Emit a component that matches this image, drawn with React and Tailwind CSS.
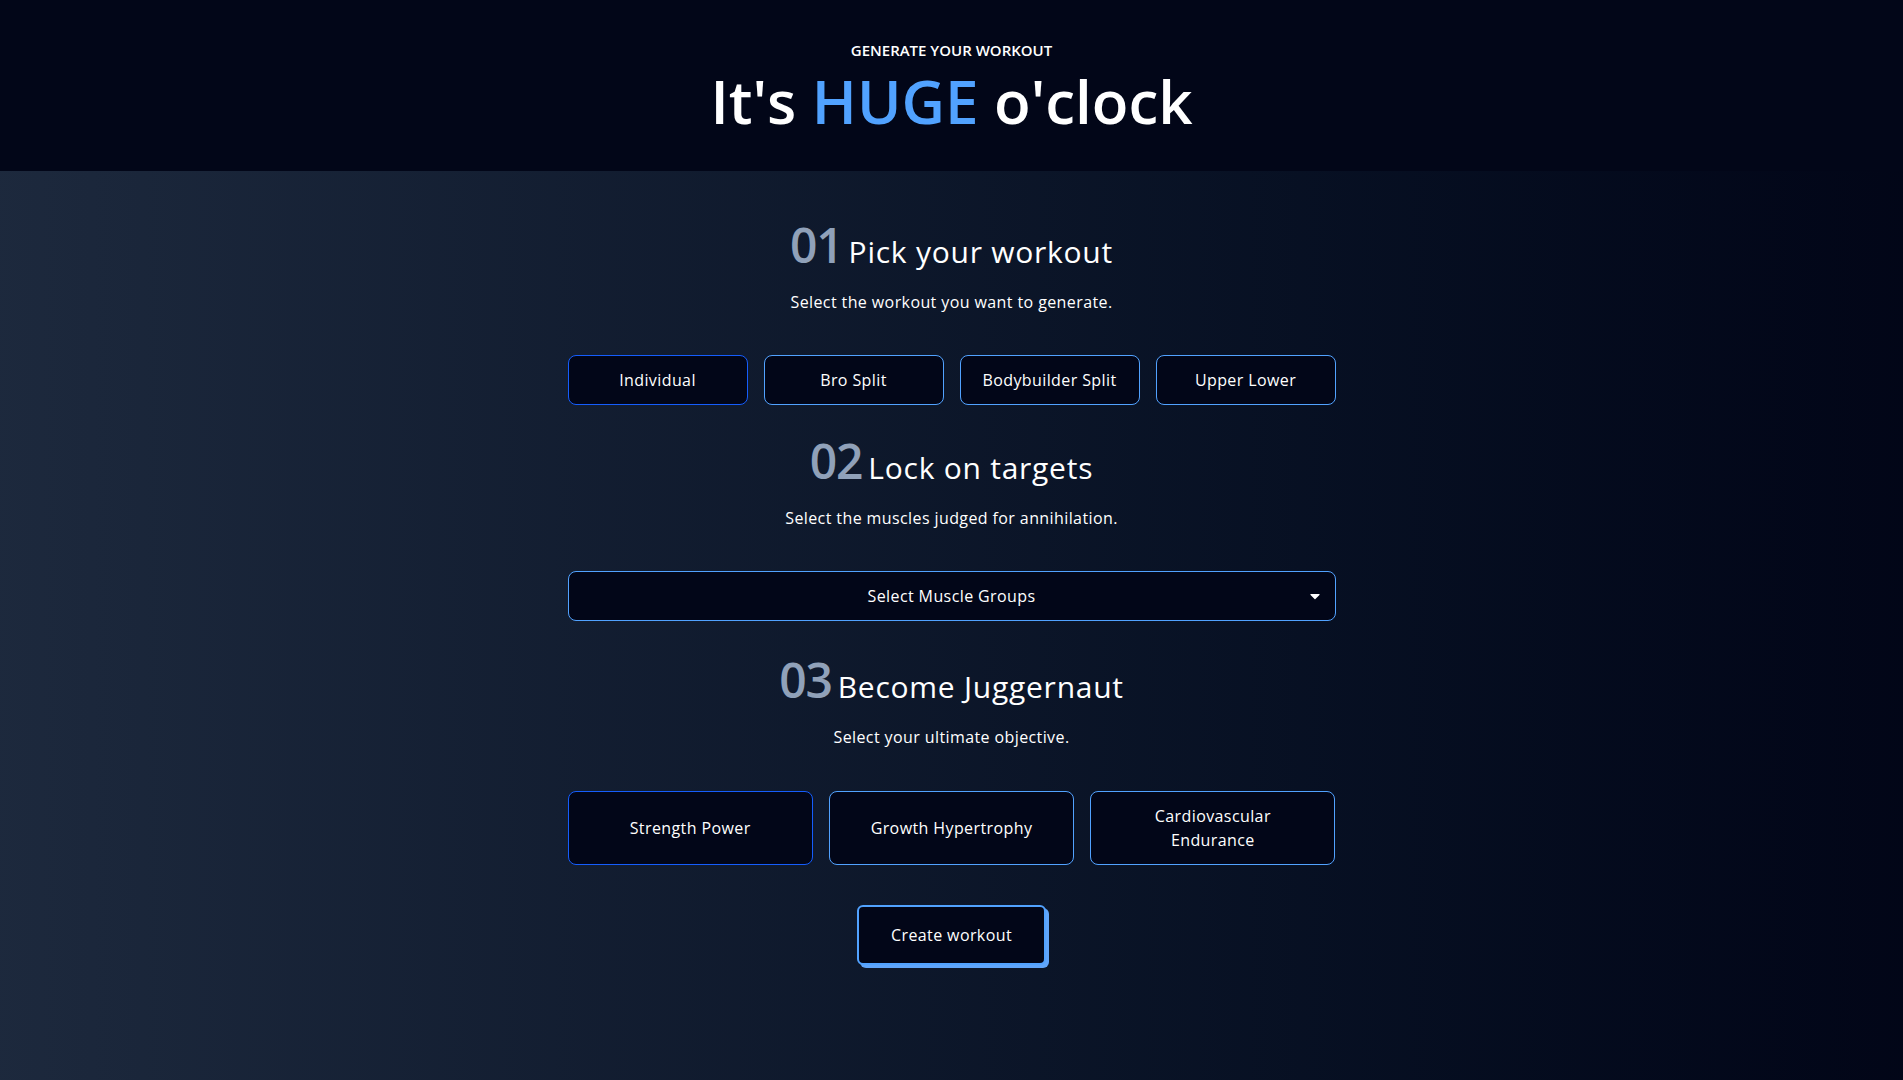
import { FaCaretDown } from 'react-icons/fa';

const workouts = ['Individual', 'Bro Split', 'Bodybuilder Split', 'Upper Lower'];
const goals = ['Strength Power', 'Growth Hypertrophy', 'Cardiovascular Endurance'];

function SectionHeader({ index, title, description }) {
  return (
    <div className="flex flex-col items-center gap-5">
      <h3 className="flex items-baseline gap-1.5 leading-none">
        <span className="text-5xl font-semibold text-slate-400 tracking-tight">{index}</span>
        <span className="text-3xl text-white tracking-wide">{title}</span>
      </h3>
      <p className="text-base text-white tracking-wide">{description}</p>
    </div>
  );
}

export default function App() {
  return (
    <div
      className="min-h-screen flex flex-col text-white"
      style={{ fontFamily: '"Open Sans", "Noto Sans", sans-serif' }}
    >
      {/* header */}
      <header className="bg-slate-950 h-[171px] flex flex-col items-center justify-start pt-[40px] gap-1">
        <p className="text-[15px] font-semibold uppercase leading-5">Generate your workout</p>
        <h1 className="text-6xl font-semibold leading-tight">
          It's <span className="text-blue-400">HUGE</span> o'clock
        </h1>
      </header>

      <main className="flex-1 bg-gradient-to-r from-slate-800 to-slate-950 flex flex-col items-center pt-[50px] pb-20">
        <div className="w-full max-w-3xl flex flex-col">
          <SectionHeader index="01" title="Pick your workout" description="Select the workout you want to generate." />
          <div className="grid grid-cols-4 gap-4 mt-[41px]">
            {workouts.map((w, i) => (
              <button
                key={w}
                className={`bg-slate-950 border rounded-lg py-3 text-base tracking-wide ${i === 0 ? 'border-blue-600' : 'border-blue-400'}`}
              >
                {w}
              </button>
            ))}
          </div>

          <div className="mt-8">
            <SectionHeader index="02" title="Lock on targets" description="Select the muscles judged for annihilation." />
          </div>
          <button className="relative mt-[41px] bg-slate-950 border border-blue-400 rounded-lg py-3 text-base tracking-wide flex items-center justify-center">
            <span>Select Muscle Groups</span>
            <FaCaretDown className="absolute right-3 top-1/2 -translate-y-1/2 text-white text-base" />
          </button>

          <div className="mt-[35px]">
            <SectionHeader index="03" title="Become Juggernaut" description="Select your ultimate objective." />
          </div>
          <div className="grid grid-cols-3 gap-4 mt-[42px]">
            {goals.map((g, i) => (
              <button
                key={g}
                className={`bg-slate-950 border rounded-lg py-3 px-8 text-base tracking-wide ${i === 0 ? 'border-blue-600' : 'border-blue-400'}`}
              >
                {g}
              </button>
            ))}
          </div>

          <div className="flex justify-center mt-10">
            <button className="bg-slate-950 border-2 border-blue-400 rounded-md px-8 py-4 text-base tracking-wide shadow-[3px_3px_0_0_#60a5fa]">
              Create workout
            </button>
          </div>
        </div>
      </main>
    </div>
  );
}
